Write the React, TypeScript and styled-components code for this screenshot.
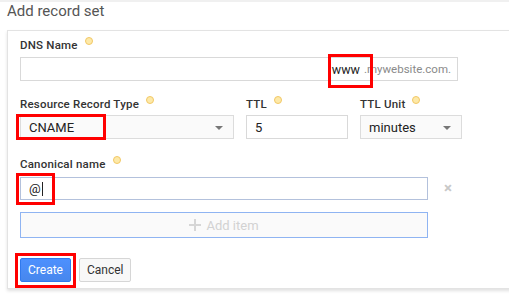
import styled, { createGlobalStyle } from "styled-components";

const GlobalStyle = createGlobalStyle`
  html, body {
    margin: 0;
    padding: 0;
    background: #fff;
    overflow: hidden;
  }
  body {
    font-family: Roboto, "Liberation Sans", Arial, sans-serif;
    color: #333;
  }
`;

const Page = styled.div`
  width: 509px;
  height: 297px;
  overflow: hidden;
  border-top: 2px solid #f0f0f0;
  box-sizing: border-box;
`;

const Title = styled.h1`
  margin: 0;
  padding: 0 0 0 7px;
  height: 28px;
  line-height: 19px;
  font-size: 15px;
  font-weight: 400;
  color: #555;
`;

const Card = styled.div`
  margin-left: 7px;
  width: 540px;
  border: 1px solid #e3e3e3;
  box-shadow: 0 2px 3px rgba(0, 0, 0, 0.12);
  padding: 7px 0 6px 12px;
  box-sizing: border-box;
  background: #fff;
`;

const Field = styled.div<{ $mt?: number }>`
  display: flex;
  flex-direction: column;
  margin-top: ${(p) => p.$mt ?? 0}px;
`;

const Label = styled.div<{ $gap?: number }>`
  display: flex;
  align-items: flex-start;
  font-size: 11.5px;
  font-weight: 500;
  line-height: 14px;
  letter-spacing: 0.2px;
  color: #333;
  margin-bottom: ${(p) => p.$gap ?? 6}px;
`;

const Dot = styled.span`
  width: 6px;
  height: 6px;
  border-radius: 50%;
  background: #fde9a8;
  border: 1px solid #f2c866;
  margin-left: 7px;
  margin-top: -1px;
`;

const Mark = styled.span<{ $l: number; $t: number; $w: number; $h: number }>`
  position: absolute;
  left: ${(p) => p.$l}px;
  top: ${(p) => p.$t}px;
  width: ${(p) => p.$w}px;
  height: ${(p) => p.$h}px;
  border: 3px solid #f00;
  box-sizing: border-box;
  pointer-events: none;
`;

const Box = styled.div<{ $w: number; $h?: number; $focus?: boolean }>`
  position: relative;
  display: flex;
  align-items: center;
  width: ${(p) => p.$w}px;
  height: ${(p) => p.$h ?? 24}px;
  box-sizing: border-box;
  border: 1px solid ${(p) => (p.$focus ? "#b3c1dc" : "#d9d9d9")};
  background: #fff;
  padding: 0 8px;
  font-size: 13px;
  color: #222;
`;

const SelectBox = styled(Box)`
  background: #fafafa;
  border-color: #dcdcdc;
  justify-content: space-between;
  padding-right: 10px;
`;

const Arrow = styled.span`
  width: 0;
  height: 0;
  border-left: 4px solid transparent;
  border-right: 4px solid transparent;
  border-top: 4px solid #777;
  margin-top: 2px;
`;

const Suffix = styled.div`
  margin-left: auto;
  margin-right: -2px;
  display: flex;
  align-items: center;
  font-size: 11.5px;
`;

const Typed = styled.span`
  color: #222;
  font-size: 12.5px;
  margin-right: 4px;
`;

const Domain = styled.span`
  color: #8a8a8a;
`;

const Caret = styled.span`
  display: inline-block;
  width: 1px;
  height: 14px;
  background: #222;
  margin-left: 1px;
`;

const Row = styled.div`
  display: flex;
  gap: 12px;
  margin-top: 16px;
`;

const LineRow = styled.div`
  display: flex;
  align-items: center;
  gap: 16px;
`;

const Remove = styled.span`
  color: #c8c8c8;
  font-size: 15px;
  line-height: 1;
  font-weight: 700;
`;

const AddItem = styled.div`
  margin-top: 12px;
  width: 408px;
  height: 26px;
  box-sizing: border-box;
  border: 1px solid #8fb4f2;
  background: #fafafa;
  display: flex;
  align-items: center;
  justify-content: center;
  gap: 5px;
  font-size: 13px;
  color: #d2d2d2;
`;

const Buttons = styled.div`
  display: flex;
  gap: 8px;
  margin-top: 20px;
`;

const Button = styled.button<{ $primary?: boolean }>`
  position: relative;
  height: 24px;
  min-width: 48px;
  padding: 0 7px;
  font-family: Roboto, "Liberation Sans", Arial, sans-serif;
  font-size: 12px;
  border-radius: 2px;
  border: 1px solid ${(p) => (p.$primary ? "#3079ed" : "#d6d6d6")};
  background: ${(p) => (p.$primary ? "linear-gradient(#4d90fe, #4787ed)" : "#f8f8f8")};
  color: ${(p) => (p.$primary ? "#fff" : "#333")};
`;

const PlusIcon = () => (
  <svg width="12" height="12" viewBox="0 0 12 12">
    <path d="M6 0v12M0 6h12" stroke="#d6d6d6" strokeWidth="2" />
  </svg>
);

export default function App() {
  return (
    <Page>
      <GlobalStyle />
      <Title>Add record set</Title>
      <Card>
        <Field>
          <Label $gap={5}>
            DNS Name <Dot />
          </Label>
          <Box $w={438}>
            <Suffix>
              <Typed>www</Typed>
              <Domain>.mywebsite.com.</Domain>
            </Suffix>
            <Mark $l={307} $t={-4} $w={45} $h={34} />
          </Box>
        </Field>
        <Row>
          <Field>
            <Label $gap={4}>
              Resource Record Type <Dot />
            </Label>
            <SelectBox $w={214}>
              CNAME
              <Arrow />
              <Mark $l={-5} $t={-2} $w={90} $h={26} />
            </SelectBox>
          </Field>
          <Field>
            <Label $gap={4}>
              TTL <Dot />
            </Label>
            <Box $w={102}>5</Box>
          </Field>
          <Field>
            <Label $gap={4}>
              TTL Unit <Dot />
            </Label>
            <SelectBox $w={102}>
              minutes
              <Arrow />
            </SelectBox>
          </Field>
        </Row>
        <Field $mt={18}>
          <Label $gap={6}>
            Canonical name <Dot />
          </Label>
          <LineRow>
            <Box $w={408} $h={23} $focus>
              @<Caret />
              <Mark $l={-5} $t={-5} $w={39} $h={32} />
            </Box>
            <Remove>×</Remove>
          </LineRow>
        </Field>
        <AddItem>
          <PlusIcon />
          Add item
        </AddItem>
        <Buttons>
          <Button $primary>
            Create
            <Mark $l={-6} $t={-6} $w={61} $h={35} />
          </Button>
          <Button>Cancel</Button>
        </Buttons>
      </Card>
    </Page>
  );
}
